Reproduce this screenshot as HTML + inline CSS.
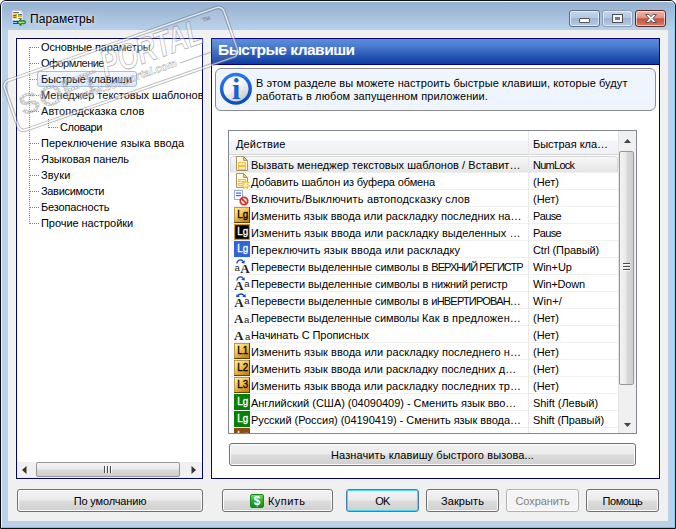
<!DOCTYPE html>
<html><head><meta charset="utf-8"><title>Параметры</title>
<style>
html,body{margin:0;padding:0;}
body{width:676px;height:529px;overflow:hidden;background:#fff;position:relative;font-family:"Liberation Sans",sans-serif;font-size:11px;color:#000;}
.abs{position:absolute;}
#frame{left:0;top:0;width:676px;height:529px;box-sizing:border-box;border-radius:6px 6px 0 0;background:linear-gradient(#97b1d1 0,#9db7d6 8px,#b9d1ea 30px,#b9d1ea 100%);border:1px solid #0c0c0c;}
#frame2{left:1px;top:1px;width:674px;height:527px;box-sizing:border-box;border-radius:5px 5px 0 0;border-top:1px solid #f2f6fb;border-left:1px solid #eef3fa;border-right:1px solid #6fdcff;border-bottom:1px solid #38dcff;}
#client{left:8px;top:30px;width:660px;height:491px;background:#f0f0f0;}
.title{left:30px;top:11px;font-size:12px;line-height:16px;color:#000;text-shadow:0 0 7px rgba(255,255,255,.9),0 0 4px rgba(255,255,255,.5);white-space:nowrap;}
.tree{left:16px;top:38px;width:187px;height:441px;box-sizing:border-box;border:1px solid #000080;background:#fff;overflow:hidden;box-shadow:0 0 0 1px #f8f8f2;}
.ti{position:absolute;height:16px;line-height:15px;white-space:nowrap;}
.sel{position:absolute;left:37px;top:71px;width:100px;height:16px;box-sizing:border-box;border:1px solid #98bce8;border-radius:3px;background:linear-gradient(#f3f8fe,#d6e7fd);}
.dotv{position:absolute;width:1px;background-image:linear-gradient(#808080 50%,transparent 50%);background-size:1px 2px;}
.doth{position:absolute;height:1px;background-image:linear-gradient(90deg,#808080 50%,transparent 50%);background-size:2px 1px;}
.btn{position:absolute;box-sizing:border-box;height:23px;border:1px solid #707070;border-radius:3px;background:linear-gradient(#f2f2f2 0,#ebebeb 48%,#dddddd 52%,#cfcfcf 100%);box-shadow:inset 0 0 0 1px #fcfcfc;text-align:center;line-height:22px;white-space:nowrap;}
.btn.def{border-color:#3c7fb1;box-shadow:inset 0 0 0 1px #48d8fb;}
.btn.dis{color:#838383;border-color:#adb2b5;background:#f4f4f4;}
.panel{left:211px;top:38px;width:449px;height:441px;box-sizing:border-box;border:1px solid #000080;background:#fff;overflow:hidden;box-shadow:0 0 0 1px #f8f8f2;}
.hdr{left:212px;top:39px;width:447px;height:25px;background:linear-gradient(#5c8ddc 0,#4a7bce 30%,#2b5cb8 62%,#0e3d9d 100%);border-bottom:1px solid #000080;}
.hdrt{left:218px;top:41px;font-size:15.5px;font-weight:bold;color:#fff;line-height:18px;white-space:nowrap;}
.info{left:215px;top:68px;width:441px;height:43px;box-sizing:border-box;border:1px solid #8c8c8c;border-radius:6px;background:#eff5fe;}
.infot{left:256px;top:77px;line-height:13px;white-space:nowrap;}
.list{left:228px;top:130px;width:409px;height:304px;box-sizing:border-box;border:1px solid #828790;background:#fff;overflow:hidden;}
.lh{position:absolute;left:0;top:0;height:23px;width:389px;background:linear-gradient(#fff 0,#fff 9px,#f4f5f8 10px,#f0f1f5 100%);border-bottom:1px solid #d5d5d5;}
.lh span{position:absolute;top:6px;line-height:14px;white-space:nowrap;}
.row{position:absolute;left:1px;width:388px;height:17px;box-sizing:border-box;border-bottom:1px solid #f0f0f0;white-space:nowrap;}
.row .t{position:absolute;left:21px;top:2px;line-height:14px;}
.row .k{position:absolute;left:303px;top:2px;line-height:14px;}
.row .ic{position:absolute;left:4px;top:0px;}
.sq{position:absolute;left:5px;top:0;width:16px;height:16px;box-sizing:border-box;font-size:10px;line-height:14px;text-align:center;letter-spacing:-0.5px;}
.aa{position:absolute;left:4px;top:0;width:18px;height:16px;font-family:"Liberation Serif",serif;line-height:20px;white-space:nowrap;}
.aa .arc{position:absolute;left:3px;top:0;}
.aa2{position:absolute;left:4px;top:0;width:18px;height:16px;font-family:"Liberation Serif",serif;line-height:16px;white-space:nowrap;}
.rsel{position:absolute;left:1px;top:25px;width:388px;height:17px;box-sizing:border-box;border:1px solid #d9d9d9;border-radius:3px;background:linear-gradient(#f8f8f8,#e5e5e5);}
.coldiv{position:absolute;left:299px;top:0;width:1px;height:302px;background:#e8e8e8;}
.vsb{position:absolute;left:389px;top:0;width:18px;height:302px;background:#f0f0f0;border-left:1px solid #e3e3e3;box-sizing:border-box;}
.thumbv{position:absolute;left:0px;top:20px;width:15px;height:234px;box-sizing:border-box;border:1px solid #979797;border-radius:2px;background:linear-gradient(90deg,#f3f3f3 0,#e9e9e9 48%,#d9d9d9 52%,#cfcfcf 100%);}
.hsb{position:absolute;left:0;top:423px;width:185px;height:16px;background:#f0f0f0;}
.thumbh{position:absolute;left:19px;top:0px;width:144px;height:15px;box-sizing:border-box;border:1px solid #979797;border-radius:2px;background:linear-gradient(#f3f3f3 0,#e9e9e9 48%,#d9d9d9 52%,#cfcfcf 100%);}
.cap{position:absolute;top:10px;height:17px;box-sizing:border-box;border:1px solid #5a6d86;border-radius:3px;box-shadow:inset 0 0 0 1px rgba(255,255,255,.6);}
</style></head><body>
<div id="frame" class="abs"></div><div id="frame2" class="abs"></div>
<svg class="abs" style="left:11px;top:10px" width="17" height="17" viewBox="0 0 17 17"><path d="M1 .5h8.500l2.500 2.500v12.500h-11z" fill="#fdfdfd" stroke="#aab6c6" stroke-width=".6"/><path d="M9.500 .5v2.500h2.500z" fill="#dde3ea"/><rect x="2.200" y="2.200" width="5.800" height="1" fill="#3c4c5a"/><rect x="1.800" y="4" width="4.200" height="4.600" fill="#fbbf3c"/><rect x="2.300" y="5" width="3" height=".9" fill="#6a4a10"/><rect x="2.300" y="6.800" width="3" height=".9" fill="#6a4a10"/><rect x="7" y="4" width="2" height="1" fill="#58b830"/><rect x="9" y="4" width="2" height="1" fill="#2868c8"/><rect x="7" y="5" width="4" height="2" fill="#f5a623"/><rect x="7.200" y="8" width="3.600" height=".9" fill="#5a6672"/><rect x="1.500" y="10" width="6" height="4.800" fill="#8cc8f8"/><rect x="2" y="11" width="5" height="1" fill="#1848b0"/><rect x="2" y="13" width="5" height="1" fill="#1848b0"/><path d="M6.500 12.300l3.400-3v1.600h2.700c1.300 0 1.800 .6 1.800 1.400s-.5 1.400-1.800 1.400h-2.700v1.600z" fill="#96e482" stroke="#0f6e08" stroke-width="1.100" stroke-linejoin="round"/></svg>
<div class="title abs" style=";letter-spacing:0.059px">Параметры</div>
<div class="cap" style="left:569px;width:31px;background:linear-gradient(#c5d6ea 0,#b4c8e0 45%,#9db6d4 50%,#b7cce4 100%)"><div class="abs" style="left:9px;top:7px;width:9px;height:3px;background:#fff;border:1px solid #555;border-radius:1px"></div></div>
<div class="cap" style="left:602px;width:31px;background:linear-gradient(#c5d6ea 0,#b4c8e0 45%,#9db6d4 50%,#b7cce4 100%);border-color:#8c9db5"><div class="abs" style="left:10px;top:4px;width:9px;height:7px;box-sizing:border-box;border:2.500px solid #f4f4f4;outline:1px solid #505050;background:#6c7d95"></div></div>
<div class="cap" style="left:635px;width:31px;background:linear-gradient(#ecb4a6 0,#de9484 45%,#c9533c 52%,#d67c66 100%);border-color:#5c2a24"><svg class="abs" style="left:8px;top:2px" width="14" height="11" viewBox="0 0 14 11"><path d="M1.500 1.500h3.500l2 2.200 2-2.200h3.500l-3.600 4 3.600 4h-3.500l-2-2.200-2 2.200h-3.500l3.600-4z" fill="#fff" stroke="#4a4a5a" stroke-width=".9"/></svg></div>
<div id="client" class="abs"></div>
<div class="tree abs">
<div class="dotv" style="left:12px;top:8px;height:177px"></div>
<div class="dotv" style="left:31px;top:80px;height:9px"></div>
<div class="doth" style="left:13px;top:8px;width:9px"></div>
<div class="doth" style="left:13px;top:24px;width:9px"></div>
<div class="doth" style="left:13px;top:40px;width:9px"></div>
<div class="doth" style="left:13px;top:56px;width:9px"></div>
<div class="doth" style="left:13px;top:72px;width:9px"></div>
<div class="doth" style="left:32px;top:88px;width:9px"></div>
<div class="doth" style="left:13px;top:104px;width:9px"></div>
<div class="doth" style="left:13px;top:120px;width:9px"></div>
<div class="doth" style="left:13px;top:136px;width:9px"></div>
<div class="doth" style="left:13px;top:152px;width:9px"></div>
<div class="doth" style="left:13px;top:168px;width:9px"></div>
<div class="doth" style="left:13px;top:184px;width:9px"></div>
<div class="sel" style="left:20px;top:32px"></div>
<div class="ti" style="left:24px;top:1px;letter-spacing:-0.141px">Основные параметры</div>
<div class="ti" style="left:24px;top:17px;letter-spacing:-0.538px">Оформление</div>
<div class="ti" style="left:24px;top:33px;letter-spacing:-0.153px">Быстрые клавиши</div>
<div class="ti" style="left:24px;top:49px;letter-spacing:-0.007px">Менеджер текстовых шаблонов</div>
<div class="ti" style="left:24px;top:65px;letter-spacing:0.070px">Автоподсказка слов</div>
<div class="ti" style="left:43px;top:81px;letter-spacing:-0.374px">Словари</div>
<div class="ti" style="left:24px;top:97px;letter-spacing:0.046px">Переключение языка ввода</div>
<div class="ti" style="left:24px;top:113px;letter-spacing:-0.057px">Языковая панель</div>
<div class="ti" style="left:24px;top:129px;letter-spacing:0.159px">Звуки</div>
<div class="ti" style="left:24px;top:145px;letter-spacing:-0.324px">Зависимости</div>
<div class="ti" style="left:24px;top:161px;letter-spacing:-0.156px">Безопасность</div>
<div class="ti" style="left:24px;top:177px;letter-spacing:-0.058px">Прочие настройки</div>
<div class="hsb"><svg class="abs" style="left:5px;top:4px" width="5" height="8" viewBox="0 0 5 8"><path d="M4.500 0v8l-4.500-4z" fill="#333"/></svg><div class="thumbh"><div class="abs" style="left:67px;top:3px;width:8px;height:7px;background:repeating-linear-gradient(90deg,#4a4a4a 0,#4a4a4a 1px,#fafafa 1px,#fafafa 2px,transparent 2px,transparent 3px)"></div></div><svg class="abs" style="left:174px;top:4px" width="5" height="8" viewBox="0 0 5 8"><path d="M.5 0v8l4.500-4z" fill="#333"/></svg></div>
</div>
<div class="panel abs"></div>
<div class="hdr abs"></div>
<div class="hdrt abs" style=";letter-spacing:-0.503px">Быстрые клавиши</div>
<div class="info abs"></div>
<svg class="abs" style="left:219px;top:72px" width="34" height="34" viewBox="0 0 34 34"><defs><linearGradient id="g1" x1=".2" y1="0" x2=".8" y2="1"><stop offset="0" stop-color="#fff"/><stop offset=".45" stop-color="#f6f6f6"/><stop offset="1" stop-color="#bdbdbd"/></linearGradient><linearGradient id="g2" x1="0" y1="0" x2=".3" y2="1"><stop offset="0" stop-color="#2f80f0"/><stop offset="1" stop-color="#0a4cc4"/></linearGradient></defs><circle cx="16.900" cy="16.800" r="14.300" fill="url(#g1)" stroke="url(#g2)" stroke-width="3.400"/><text x="17.200" y="26.800" text-anchor="middle" font-family="Liberation Serif,serif" font-weight="bold" font-size="30" fill="#1560d8">i</text></svg>
<div class="infot abs"><span style=";letter-spacing:0.081px">В этом разделе вы можете настроить быстрые клавиши, которые будут</span><br><span style=";letter-spacing:0.107px">работать в любом запущенном приложении.</span></div>
<div class="list abs">
<div class="lh"><span style="left:7px;letter-spacing:0.143px">Действие</span><span style="left:304px;letter-spacing:-0.033px">Быстрая кла…</span></div>
<div class="rsel"></div>
<div class="row" style="top:25px"><svg class="ic" width="16" height="16" viewBox="0 0 16 16"><path d="M2.500 .5h7l4 4v10h-11z" fill="#fffbe6" stroke="#a89868"/><path d="M9.500 .5v4h4z" fill="#e8c878" stroke="#a89868" stroke-linejoin="round"/><rect x="4.500" y="6.500" width="7" height="3" fill="#ffeeaa" stroke="#f2bf4c"/><rect x="4.500" y="10.500" width="7" height="3" fill="#ffeeaa" stroke="#f2bf4c"/></svg><span class="t" style=";letter-spacing:0.038px">Вызвать менеджер текстовых шаблонов / Вставит…</span><span class="k" style=";letter-spacing:-0.724px">NumLock</span></div>
<div class="row" style="top:42px"><svg class="ic" width="16" height="16" viewBox="0 0 16 16"><path d="M2.500 .5h7l4 4v10h-11z" fill="#fffbe6" stroke="#a89868"/><path d="M9.500 .5v4h4z" fill="#e8c878" stroke="#a89868" stroke-linejoin="round"/><rect x="4.500" y="6.500" width="7" height="2" fill="#ffeeaa" stroke="#f2bf4c"/><rect x="4.500" y="10.500" width="5" height="2" fill="#ffeeaa" stroke="#f2bf4c"/><path d="M11.500 7.500l1 2.500 2.500-1-1.500 2.500 2.500 1.500-2.800 .5 .3 2.500-2-1.700-2 1.700 .3-2.500-2.300-.5 2.500-1.500-1.500-2.500 2.500 1z" fill="#fff6b0" stroke="#f0b838" stroke-width=".8"/></svg><span class="t" style=";letter-spacing:-0.138px">Добавить шаблон из буфера обмена</span><span class="k" style=";letter-spacing:-0.013px">(Нет)</span></div>
<div class="row" style="top:59px"><svg class="ic" width="16" height="17" viewBox="0 0 16 17"><rect x=".5" y=".5" width="8" height="9" fill="#fff" stroke="#9ab0d0"/><rect x="2" y="2.500" width="5" height="1.200" fill="#3a70d0"/><rect x="2" y="5" width="5" height="1.200" fill="#3a70d0"/><circle cx="10" cy="11" r="3.700" fill="#fff" stroke="#d83020" stroke-width="1.800"/><path d="M7.600 8.600l4.800 4.800" stroke="#d83020" stroke-width="1.800"/></svg><span class="t" style=";letter-spacing:0.167px">Включить/Выключить автоподсказку слов</span><span class="k" style=";letter-spacing:-0.013px">(Нет)</span></div>
<div class="row" style="top:76px"><svg class="ic" width="16" height="16" viewBox="0 0 16 16"><defs><linearGradient id="gd" x1="0" y1="0" x2=".6" y2="1"><stop offset="0" stop-color="#fff0a4"/><stop offset=".5" stop-color="#f4c452"/><stop offset="1" stop-color="#cc8814"/></linearGradient></defs><rect x="0" y="0" width="16" height="16" fill="#5a4208"/><rect x="0" y="0" width="15" height="15" fill="#b89a50"/><rect x="1" y="1" width="14" height="14" fill="url(#gd)"/><text x="8.700" y="11.100" text-anchor="middle" font-family="Liberation Sans,sans-serif" font-size="10.500"  fill="#000" stroke="#000" stroke-width=".35" textLength="10.800" lengthAdjust="spacingAndGlyphs">Lg</text></svg><span class="t" style=";letter-spacing:0.019px">Изменить язык ввода или раскладку последних на…</span><span class="k" style=";letter-spacing:-0.641px">Pause</span></div>
<div class="row" style="top:93px"><svg class="ic" width="16" height="16" viewBox="0 0 16 16"><rect width="16" height="16" fill="#c89838"/><rect x="1.200" y="1.200" width="13.600" height="13.600" fill="#000"/><text x="8.700" y="11.100" text-anchor="middle" font-family="Liberation Sans,sans-serif" font-size="10.500"  fill="#fff" stroke="#fff" stroke-width=".35" textLength="10.800" lengthAdjust="spacingAndGlyphs">Lg</text></svg><span class="t" style=";letter-spacing:0.045px">Изменить язык ввода или раскладку выделенных …</span><span class="k" style=";letter-spacing:-0.641px">Pause</span></div>
<div class="row" style="top:110px"><svg class="ic" width="16" height="16" viewBox="0 0 16 16"><rect width="16" height="16" fill="#3164d4"/><text x="8.700" y="11.100" text-anchor="middle" font-family="Liberation Sans,sans-serif" font-size="10.500"  fill="#fff" stroke="#fff" stroke-width=".35" textLength="10.800" lengthAdjust="spacingAndGlyphs">Lg</text></svg><span class="t" style=";letter-spacing:0.118px">Переключить язык ввода или раскладку</span><span class="k" style=";letter-spacing:-0.118px">Ctrl (Правый)</span></div>
<div class="row" style="top:127px"><svg class="ic" width="18" height="17" viewBox="0 0 18 17"><path d="M2.800 5.500c.3-3.500 4.200-4.600 6.200-2.300" fill="none" stroke="#1040c8" stroke-width="1.300"/><path d="M10.700 5.600l-3.600-.8 3.400-2.600z" fill="#1040c8"/><text x="0.5" y="12.5" font-family="Liberation Sans,sans-serif" font-size="9.500" fill="#222">a</text><text x="6.3" y="15.2" font-family="Liberation Serif,serif" font-weight="bold" font-size="13" fill="#222">A</text></svg><span class="t"><span style=";letter-spacing:-0.074px">Перевести выделенные символы в </span><span style=";letter-spacing:-0.976px">ВЕРХНИЙ РЕГИСТР</span></span><span class="k" style=";letter-spacing:-0.123px">Win+Up</span></div>
<div class="row" style="top:144px"><svg class="ic" width="18" height="17" viewBox="0 0 18 17"><path d="M2.800 5.500c.3-3.500 4.200-4.600 6.200-2.300" fill="none" stroke="#1040c8" stroke-width="1.300"/><path d="M10.700 5.600l-3.600-.8 3.400-2.600z" fill="#1040c8"/><text x="0.3" y="15.2" font-family="Liberation Serif,serif" font-weight="bold" font-size="13" fill="#222">A</text><text x="10.3" y="12.3" font-family="Liberation Sans,sans-serif" font-size="9.500" fill="#222">a</text></svg><span class="t"><span style=";letter-spacing:-0.074px">Перевести выделенные символы в </span><span style=";letter-spacing:-0.296px">нижний регистр</span></span><span class="k" style=";letter-spacing:-0.188px">Win+Down</span></div>
<div class="row" style="top:161px"><svg class="ic" width="18" height="17" viewBox="0 0 18 17"><path d="M4 3.500c1.500-2 4.500-2 6 0" fill="none" stroke="#1040c8" stroke-width="1.300"/><path d="M11.800 5.300l-3.600-.6 3.200-2.700z" fill="#1040c8"/><path d="M2.200 5.300l3.600-.6-3.200-2.700z" fill="#1040c8"/><text x="0.3" y="15.2" font-family="Liberation Serif,serif" font-weight="bold" font-size="13" fill="#222">A</text><text x="10.3" y="12.3" font-family="Liberation Sans,sans-serif" font-size="9.500" fill="#222">a</text></svg><span class="t"><span style=";letter-spacing:-0.074px">Перевести выделенные символы в </span><span style=";letter-spacing:-0.803px">иНВЕРТИРОВАН…</span></span><span class="k" style=";letter-spacing:0.092px">Win+/</span></div>
<div class="row" style="top:178px"><svg class="ic" width="18" height="17" viewBox="0 0 18 17"><text x="0" y="14" font-family="Liberation Serif,serif" font-weight="bold" font-size="13" fill="#222">A</text><text x="10" y="14" font-family="Liberation Sans,sans-serif" font-size="9.500" fill="#222">a.</text></svg><span class="t"><span style=";letter-spacing:-0.097px">Перевести выделенные символы </span><span style=";letter-spacing:0.147px">Как в предложен…</span></span><span class="k" style=";letter-spacing:-0.013px">(Нет)</span></div>
<div class="row" style="top:195px"><svg class="ic" width="18" height="17" viewBox="0 0 18 17"><text x="0" y="14" font-family="Liberation Serif,serif" font-weight="bold" font-size="13" fill="#222">A</text><text x="11" y="14" font-family="Liberation Sans,sans-serif" font-size="9.500" fill="#222">a</text></svg><span class="t" style=";letter-spacing:-0.085px">Начинать С Прописных</span><span class="k" style=";letter-spacing:-0.013px">(Нет)</span></div>
<div class="row" style="top:212px"><svg class="ic" width="16" height="16" viewBox="0 0 16 16"><rect x="0" y="0" width="16" height="16" fill="#5a4208"/><rect x="0" y="0" width="15" height="15" fill="#b89a50"/><rect x="1" y="1" width="14" height="14" fill="url(#gd)"/><text x="8.700" y="11.100" text-anchor="middle" font-family="Liberation Sans,sans-serif" font-size="10.500"  fill="#000" stroke="#000" stroke-width=".35" textLength="10.800" lengthAdjust="spacingAndGlyphs">L1</text></svg><span class="t" style=";letter-spacing:0.045px">Изменить язык ввода или раскладку последнего н…</span><span class="k" style=";letter-spacing:-0.013px">(Нет)</span></div>
<div class="row" style="top:229px"><svg class="ic" width="16" height="16" viewBox="0 0 16 16"><rect x="0" y="0" width="16" height="16" fill="#5a4208"/><rect x="0" y="0" width="15" height="15" fill="#b89a50"/><rect x="1" y="1" width="14" height="14" fill="url(#gd)"/><text x="8.700" y="11.100" text-anchor="middle" font-family="Liberation Sans,sans-serif" font-size="10.500"  fill="#000" stroke="#000" stroke-width=".35" textLength="10.800" lengthAdjust="spacingAndGlyphs">L2</text></svg><span class="t" style=";letter-spacing:0.031px">Изменить язык ввода или раскладку последних д…</span><span class="k" style=";letter-spacing:-0.013px">(Нет)</span></div>
<div class="row" style="top:246px"><svg class="ic" width="16" height="16" viewBox="0 0 16 16"><rect x="0" y="0" width="16" height="16" fill="#5a4208"/><rect x="0" y="0" width="15" height="15" fill="#b89a50"/><rect x="1" y="1" width="14" height="14" fill="url(#gd)"/><text x="8.700" y="11.100" text-anchor="middle" font-family="Liberation Sans,sans-serif" font-size="10.500"  fill="#000" stroke="#000" stroke-width=".35" textLength="10.800" lengthAdjust="spacingAndGlyphs">L3</text></svg><span class="t" style=";letter-spacing:0.030px">Изменить язык ввода или раскладку последних тр…</span><span class="k" style=";letter-spacing:-0.013px">(Нет)</span></div>
<div class="row" style="top:263px"><svg class="ic" width="16" height="16" viewBox="0 0 16 16"><rect width="16" height="16" fill="#088008"/><text x="8.700" y="11.100" text-anchor="middle" font-family="Liberation Sans,sans-serif" font-size="10.500"  fill="#fff" stroke="#fff" stroke-width=".35" textLength="10.800" lengthAdjust="spacingAndGlyphs">Lg</text></svg><span class="t" style=";letter-spacing:-0.025px">Английский (США) (04090409) - Сменить язык вво…</span><span class="k" style=";letter-spacing:-0.048px">Shift (Левый)</span></div>
<div class="row" style="top:280px"><svg class="ic" width="16" height="16" viewBox="0 0 16 16"><rect width="16" height="16" fill="#088008"/><text x="8.700" y="11.100" text-anchor="middle" font-family="Liberation Sans,sans-serif" font-size="10.500"  fill="#fff" stroke="#fff" stroke-width=".35" textLength="10.800" lengthAdjust="spacingAndGlyphs">Lg</text></svg><span class="t" style=";letter-spacing:-0.037px">Русский (Россия) (04190419) - Сменить язык ввода…</span><span class="k" style=";letter-spacing:-0.103px">Shift (Правый)</span></div>
<div class="row" style="top:297px"><svg class="ic" width="16" height="16" viewBox="0 0 16 16"><rect width="16" height="16" fill="#8e4a12"/><text x="8.700" y="11.100" text-anchor="middle" font-family="Liberation Sans,sans-serif" font-size="10.500"  fill="#fff" stroke="#fff" stroke-width=".35" textLength="10.800" lengthAdjust="spacingAndGlyphs">Lg</text></svg><span class="t" style=";letter-spacing:0.125px">Украинский (Украина) (04220422) - Сменить язык…</span><span class="k">Shift+Ctrl</span></div>
<div class="coldiv"></div>
<div class="vsb"><svg class="abs" style="left:5px;top:8px" width="7" height="4" viewBox="0 0 7 4"><path d="M0 4h7l-3.500-4z" fill="#444"/></svg><div class="thumbv"><div class="abs" style="left:3px;top:111px;width:7px;height:8px;background:repeating-linear-gradient(#4a4a4a 0,#4a4a4a 1px,#fafafa 1px,#fafafa 2px,transparent 2px,transparent 3px)"></div></div><svg class="abs" style="left:5px;top:292px" width="7" height="4" viewBox="0 0 7 4"><path d="M0 0h7l-3.500 4z" fill="#444"/></svg></div>
</div>
<div class="btn" style="left:229px;top:443px;width:407px"><span style=";letter-spacing:0.105px">Назначить клавишу быстрого вызова...</span></div>
<div class="btn" style="left:17px;top:489px;width:186px"><span style=";letter-spacing:-0.158px">По умолчанию</span></div>
<div class="btn" style="left:222px;top:489px;width:111px"><span class="abs" style="left:27px;top:4px;width:14px;height:14px;box-sizing:border-box;background:linear-gradient(#7ada58,#2aa82a 50%,#148c14);border:1px solid #1a8a1a;border-radius:2px;color:#fff;font-weight:bold;font-size:12px;line-height:12px;text-align:center">$</span><span class="abs" style="left:45px;top:0;letter-spacing:0.453px">Купить</span></div>
<div class="btn def" style="left:346px;top:489px;width:73px"><span style=";letter-spacing:-0.803px">OK</span></div>
<div class="btn" style="left:426px;top:489px;width:73px"><span style=";letter-spacing:0.118px">Закрыть</span></div>
<div class="btn dis" style="left:506px;top:489px;width:73px"><span style=";letter-spacing:-0.052px">Сохранить</span></div>
<div class="btn" style="left:586px;top:489px;width:73px"><span style=";letter-spacing:-0.450px">Помощь</span></div>
<svg class="abs" style="left:0;top:0;pointer-events:none" width="270" height="170" viewBox="0 0 270 170">
<defs><pattern id="dots" width="3.200" height="3.200" patternUnits="userSpaceOnUse"><rect width="3.200" height="3.200" fill="rgba(255,255,255,.25)"/><rect x=".5" y=".5" width="2.200" height="2.200" fill="none" stroke="rgba(105,105,110,.5)" stroke-width=".7"/></pattern></defs>
<g transform="translate(1,81.700) rotate(-19.300)" font-family="Liberation Sans,sans-serif">
<rect x="0" y="0" width="235" height="55" rx="7" fill="rgba(255,255,255,.08)" stroke="rgba(105,105,110,.45)" stroke-width="1"/>
<rect x="1.200" y="1.200" width="232.600" height="52.600" rx="6" fill="none" stroke="rgba(255,255,255,.6)" stroke-width="1.300"/>
<rect x="2.600" y="2.600" width="229.800" height="49.800" rx="5" fill="none" stroke="rgba(105,105,110,.45)" stroke-width="1"/>
<text x="9" y="39.500" font-size="29" font-weight="bold" textLength="84" lengthAdjust="spacingAndGlyphs" fill="url(#dots)">SOFT</text>
<text x="100" y="30" font-size="36" font-style="italic" font-weight="bold" textLength="106" lengthAdjust="spacingAndGlyphs" fill="rgba(255,255,255,.4)" stroke="rgba(105,105,110,.5)" stroke-width=".9">PORTAL</text>
<text x="210" y="13" font-size="9" font-style="italic" fill="rgba(255,255,255,.5)" stroke="rgba(105,105,110,.55)" stroke-width=".6">™</text>
<text x="68" y="43.500" font-size="11" font-style="italic" font-weight="bold" textLength="104" lengthAdjust="spacingAndGlyphs" fill="rgba(255,255,255,.5)" stroke="rgba(105,105,110,.55)" stroke-width=".5">www.softportal.com</text>
<path d="M175 41.500h40" stroke="rgba(105,105,110,.45)" stroke-width="1"/>
</g>
</svg>

</body></html>
